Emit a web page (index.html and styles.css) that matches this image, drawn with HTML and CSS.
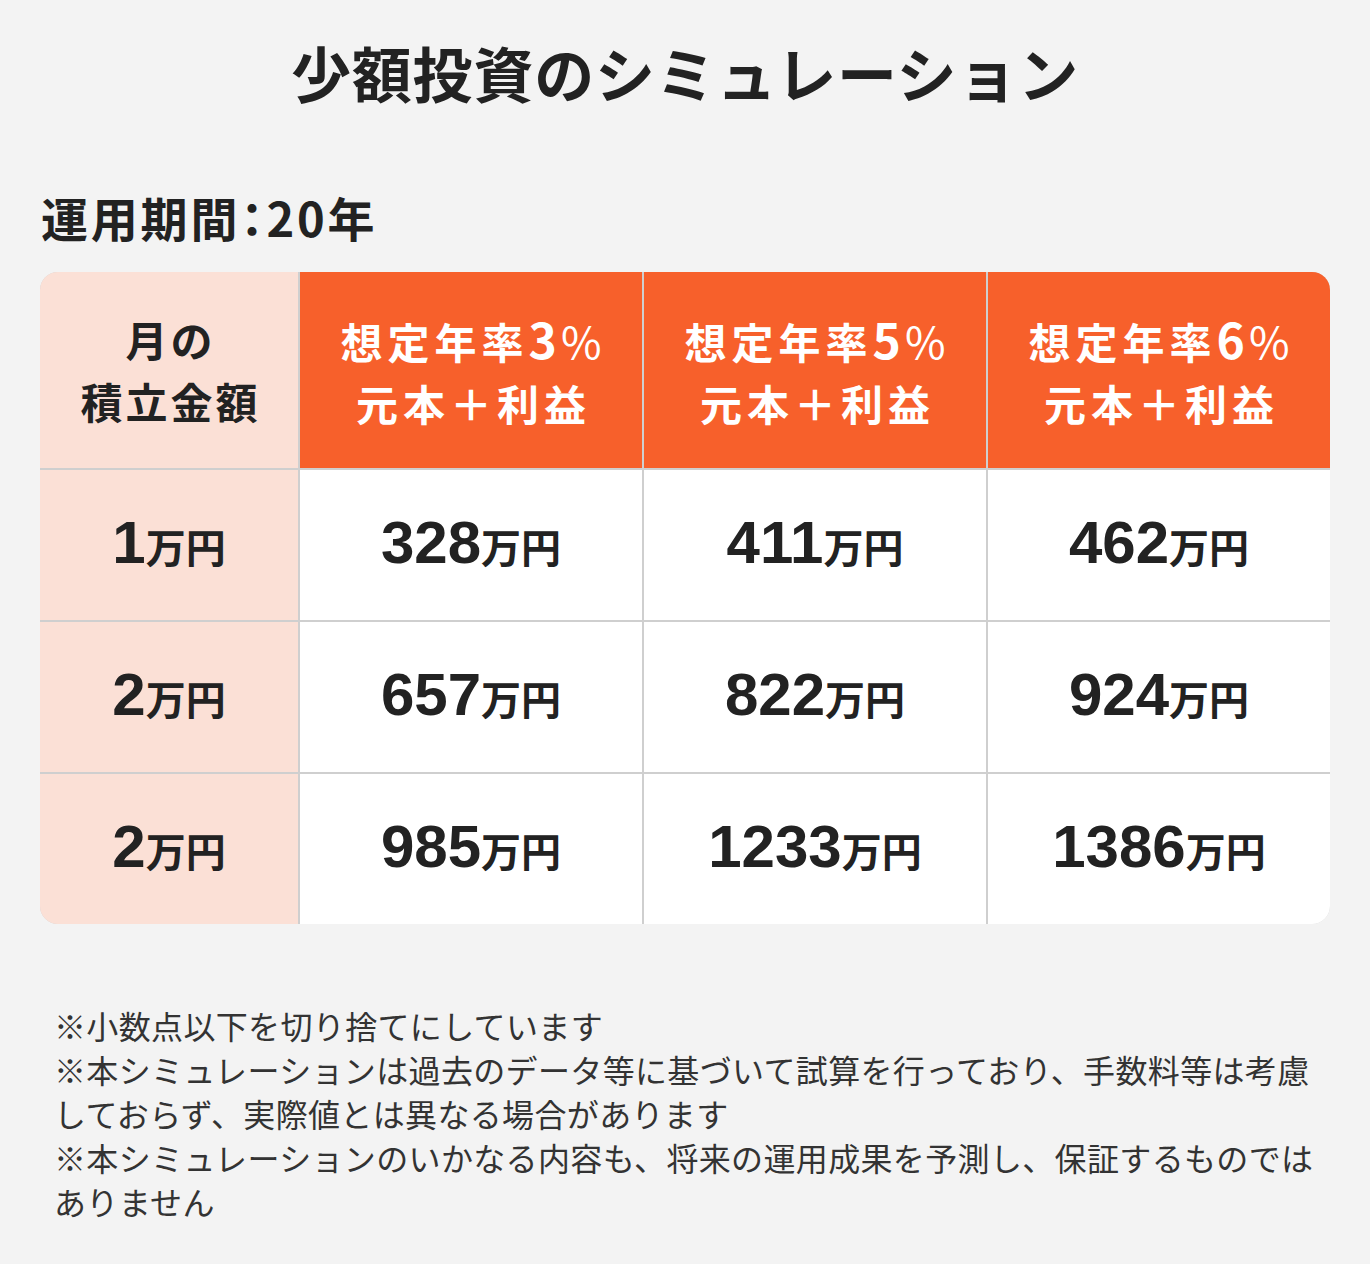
FILE: index.html
```html
<!DOCTYPE html>
<html lang="ja">
<head>
<meta charset="utf-8">
<title>少額投資のシミュレーション</title>
<link rel="stylesheet" href="styles.css">
</head>
<body>
<main class="page">
  <h1 class="title">少額投資のシミュレーション</h1>
  <h2 class="period">運用期間<span class="colon">：</span>20年</h2>
  <div class="table">
    <div class="cell head-first"><div>月の<br>積立金額</div></div>
    <div class="cell head"><div>想定年率<span class="rate">3</span><span class="pct">%</span><br>元本＋利益</div></div>
    <div class="cell head"><div>想定年率<span class="rate">5</span><span class="pct">%</span><br>元本＋利益</div></div>
    <div class="cell head"><div>想定年率<span class="rate">6</span><span class="pct">%</span><br>元本＋利益</div></div>

    <div class="cell side"><span class="num">1</span><span class="unit">万円</span></div>
    <div class="cell val"><span class="num">328</span><span class="unit">万円</span></div>
    <div class="cell val"><span class="num">411</span><span class="unit">万円</span></div>
    <div class="cell val"><span class="num">462</span><span class="unit">万円</span></div>

    <div class="cell side"><span class="num">2</span><span class="unit">万円</span></div>
    <div class="cell val"><span class="num">657</span><span class="unit">万円</span></div>
    <div class="cell val"><span class="num">822</span><span class="unit">万円</span></div>
    <div class="cell val"><span class="num">924</span><span class="unit">万円</span></div>

    <div class="cell side"><span class="num">2</span><span class="unit">万円</span></div>
    <div class="cell val"><span class="num">985</span><span class="unit">万円</span></div>
    <div class="cell val"><span class="num">1233</span><span class="unit">万円</span></div>
    <div class="cell val"><span class="num">1386</span><span class="unit">万円</span></div>
  </div>
  <div class="notes">
    <p>※小数点以下を切り捨てにしています</p>
    <p>※本シミュレーションは過去のデータ等に基づいて試算を行っており、手数料等は考慮しておらず、実際値とは異なる場合があります</p>
    <p>※本シミュレーションのいかなる内容も、将来の運用成果を予測し、保証するものではありません</p>
  </div>
</main>
</body>
</html>
```

FILE: styles.css
```css
* { box-sizing: border-box; }
html, body {
  margin: 0;
  padding: 0;
  background: #f3f3f3;
}
body {
  font-family: "Noto Sans CJK JP", "Noto Sans", sans-serif;
  color: #222;
}
.page {
  padding: 36px 0 40px;
}
.title {
  margin: 0;
  text-align: center;
  font-size: 60px;
  line-height: 72px;
  font-weight: 700;
  letter-spacing: 0.8px;
}
.period {
  margin: 79px 0 0 41px;
  font-size: 47px;
  line-height: 60px;
  font-weight: 700;
  letter-spacing: 2.8px;
}
.colon {
  font-feature-settings: "palt";
}
.table {
  margin: 25px 40px 0;
  display: grid;
  grid-template-columns: 258px repeat(3, 1fr);
  grid-template-rows: 196px repeat(3, 150px);
  gap: 2px;
  background: #cfcfcf;
  border-radius: 18px;
  overflow: hidden;
}
.cell {
  display: flex;
  align-items: center;
  justify-content: center;
  text-align: center;
}
.head-first {
  background: #fbe0d6;
  font-size: 42px;
  line-height: 62px;
  font-weight: 700;
  letter-spacing: 3px;
  padding-left: 3px;
}
.head {
  background: #f7602b;
  color: #fff;
  font-size: 42px;
  line-height: 62px;
  font-weight: 700;
  letter-spacing: 5px;
  padding-left: 5px;
}
.rate {
  font-size: 48px;
  letter-spacing: 4px;
}
.pct {
  font-weight: 400;
  font-size: 44px;
}
.side {
  background: #fbe0d6;
  align-items: baseline;
  padding-top: 43px;
}
.val {
  background: #fff;
  align-items: baseline;
  padding-top: 43px;
}
.num {
  font-family: "Liberation Sans", Arial, sans-serif;
  font-weight: 700;
  font-size: 60px;
  line-height: 1;
}
.unit {
  font-size: 40px;
  font-weight: 700;
  line-height: 1;
}
.notes {
  margin: 79px 41px 0 54px;
  font-size: 32px;
  line-height: 44px;
  letter-spacing: 0.35px;
  color: #333;
}
.notes p {
  margin: 0;
}
```
